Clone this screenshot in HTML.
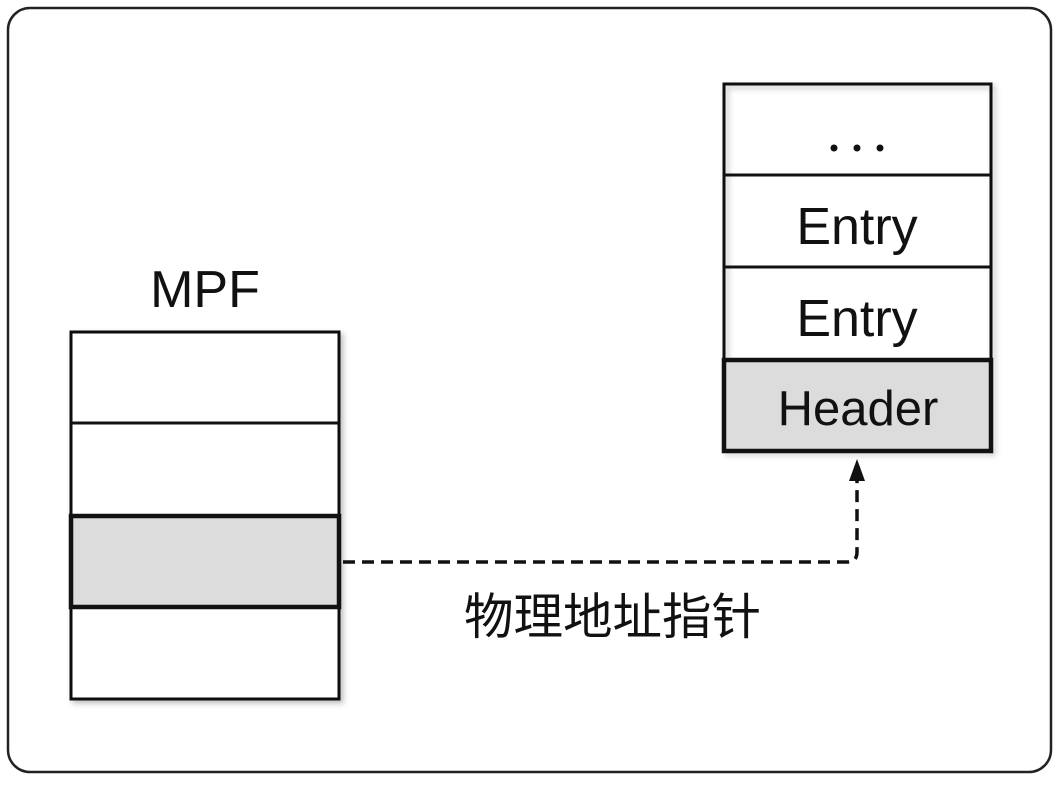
<!DOCTYPE html>
<html><head><meta charset="utf-8"><style>
html,body{margin:0;padding:0;background:#fff;}
</style></head><body>
<svg width="1059" height="780" xmlns="http://www.w3.org/2000/svg">
<defs><filter id="s" x="-10%" y="-10%" width="130%" height="130%"><feDropShadow dx="3" dy="3" stdDeviation="3" flood-opacity="0.25"/></filter></defs>
<rect x="8" y="8" width="1043" height="764" rx="22" fill="#fff" stroke="#222" stroke-width="2.5"/>
<g font-family="Liberation Sans, sans-serif" font-size="52" text-anchor="middle" fill="#111">
<text x="205" y="307">MPF</text>
<text x="857" y="244">Entry</text>
<text x="857" y="336">Entry</text>
</g>
<g fill="#111"><circle cx="834" cy="148" r="3.5"/><circle cx="857" cy="148" r="3.5"/><circle cx="880" cy="148" r="3.5"/></g>
<g filter="url(#s)">
<rect x="71" y="332" width="268" height="367" fill="#fff" stroke="#111" stroke-width="3"/>
<rect x="724" y="84" width="267" height="367" fill="none" stroke="#111" stroke-width="3"/>
</g>
<line x1="71" y1="423" x2="339" y2="423" stroke="#111" stroke-width="3"/>
<line x1="724" y1="175" x2="991" y2="175" stroke="#111" stroke-width="3"/>
<line x1="724" y1="267" x2="991" y2="267" stroke="#111" stroke-width="3"/>
<rect x="71" y="516" width="268" height="91" fill="#dcdcdc" stroke="#111" stroke-width="4.5"/>
<rect x="724" y="360" width="267" height="91" fill="#dcdcdc" stroke="#111" stroke-width="4.5"/>
<text x="858" y="425" font-family="Liberation Sans, sans-serif" font-size="49" text-anchor="middle" fill="#111">Header</text>
<path d="M343 562 H847 Q857 562 857 552 V478" fill="none" stroke="#111" stroke-width="3.5" stroke-dasharray="12 7"/>
<path d="M849 481 L857 459 L865 481 Z" fill="#111"/>
<text x="464" y="634" font-family="Liberation Sans, 'Noto Sans CJK SC', sans-serif" font-size="49.5" fill="#111">物理地址指针</text>
</svg>
</body></html>
